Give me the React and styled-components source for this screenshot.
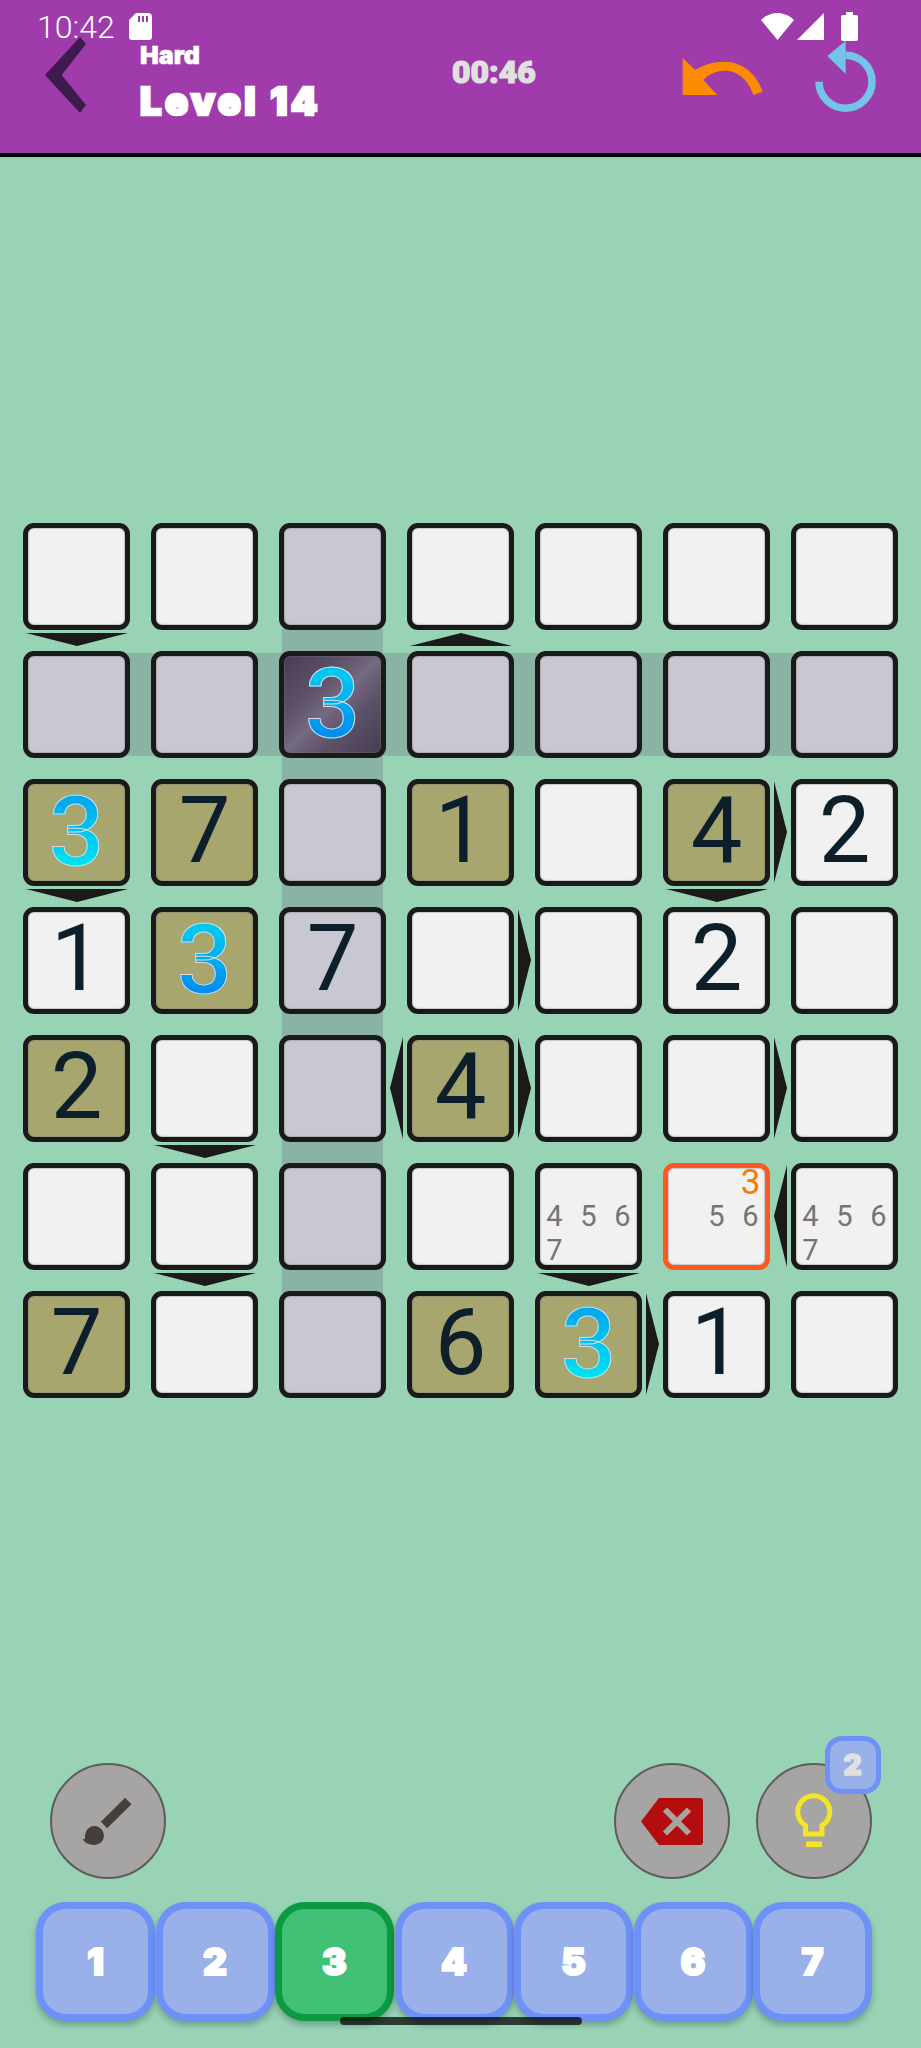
import React from "react";
import styled, { createGlobalStyle, css } from "styled-components";

const GlobalStyle = createGlobalStyle`
  html, body {
    margin: 0;
    padding: 0;
    background: #98d3b6;
  }
`;

const Page = styled.div`
  position: relative;
  width: 921px;
  height: 2048px;
  overflow: hidden;
  background: #98d3b6;
  display: flex;
  flex-direction: column;
  font-family: "Roboto", "Liberation Sans", sans-serif;
`;

const Header = styled.header`
  height: 153px;
  flex: none;
  background: #a03bab;
  border-bottom: 4px solid #000;
`;

const StatusBar = styled.div`
  position: relative;
  z-index: 1;
  height: 37px;
  box-sizing: border-box;
  padding: 8px 63px 0 37px;
  display: flex;
  align-items: flex-start;
`;

const Clock = styled.span`
  font-size: 32px;
  font-weight: 300;
  line-height: 38px;
  height: 29px;
  color: #fff;
`;

const StatusIcon = styled.svg`
  flex: none;
  display: block;
  margin: ${({ $margin }) => $margin || "4px 0 0 0"};
`;

const ToolRow = styled.div`
  display: grid;
  grid-template-columns: 95px 312px 228px 132px 1fr;
  padding-left: 45px;
  align-items: start;
`;

const TitleBlock = styled.div`
  margin-top: 5px;
  color: #fff;
  font-family: "Inter", "Liberation Sans", sans-serif;
  font-weight: 900;
`;

const Difficulty = styled.div`
  font-size: 25px;
  line-height: 26px;
  -webkit-text-stroke: 0.6px #fff;
`;

const Level = styled.div`
  margin-top: 15px;
  font-size: 38px;
  line-height: 36px;
  letter-spacing: 3.5px;
  -webkit-text-stroke: 2.6px #fff;
`;

const Timer = styled.div`
  margin-top: 18px;
  font-family: "Roboto", "Liberation Sans", sans-serif;
  font-size: 32px;
  line-height: 34px;
  font-weight: 900;
  color: #e0e0e0;
  -webkit-text-stroke: 1.2px #e0e0e0;
`;

const ToolIcon = styled.svg`
  display: block;
  margin-top: ${({ $top }) => $top}px;
`;

const Board = styled.div`
  margin: 366px 0 0 23px;
  display: grid;
  grid-template-columns: repeat(7, 107px);
  grid-template-rows: repeat(7, 107px);
  gap: 21px;
`;

const RowBand = styled.div`
  grid-row: ${({ $row }) => $row};
  grid-column: 1 / 8;
  margin: 2px 30px;
  background: #88b3a5;
`;

const ColumnBand = styled.div`
  grid-column: ${({ $col }) => $col};
  grid-row: 2 / 8;
  margin: -22px 3px 30px 3px;
  background: #88b3a5;
`;

const cellFills = {
  white: "#f1f1f1",
  grey: "#c9c7d2",
  olive: "#a7a66f",
  focus: "linear-gradient(135deg, #483c55 0%, #5e5268 32%, #746a82 50%, #5e5268 68%, #483c55 100%)",
};

const Cell = styled.div`
  position: relative;
  box-sizing: border-box;
  grid-column: ${({ $col }) => $col};
  grid-row: ${({ $row }) => $row};
  border: 5px solid ${({ $selected }) => ($selected ? "#ff5722" : "#1a1a1a")};
  border-radius: 11px;
  background: ${({ $fill }) => cellFills[$fill]};
  box-shadow: inset 0 0 1px 1px rgba(120, 120, 120, 0.35);
  display: flex;
  align-items: center;
  justify-content: center;
`;

const Digit = styled.span`
  font-size: 92px;
  line-height: 1;
  margin-top: -3px;
  color: #0c1f2a;
`;

const MatchDigit = styled(Digit)`
  font-size: 97px;
  font-weight: 500;
  margin-top: -1px;
  color: transparent;
  background: linear-gradient(
    180deg,
    ${({ $flip }) => ($flip ? "#00abf0 20%, #00dff2 80%" : "#00c6f2 20%, #008ff0 80%")}
  );
  -webkit-background-clip: text;
  background-clip: text;
  -webkit-text-stroke: 1px #dcdcdc;
`;

const PencilGrid = styled.div`
  display: grid;
  grid-template-columns: repeat(3, 34px);
  grid-template-rows: repeat(3, 34px);
  place-items: center;
  font-size: 29px;
  line-height: 1;
  color: #757575;
`;

const PencilMark = styled.span`
  ${({ $active }) =>
    $active &&
    css`
      font-size: 35px;
      color: #f57c00;
    `}
`;

const Arrow = styled.svg`
  position: absolute;
  display: block;
  ${({ $dir }) =>
    $dir === "down" || $dir === "up"
      ? css`
          left: -2px;
          top: 105px;
        `
      : css`
          left: 106px;
          top: -3px;
        `}
`;

const Actions = styled.div`
  margin-top: 365px;
  padding: 0 49px 0 50px;
  display: flex;
  gap: 26px;
`;

const ActionButton = styled.div`
  position: relative;
  box-sizing: border-box;
  width: 116px;
  height: 116px;
  border: 2.5px solid #5f5c5c;
  border-radius: 50%;
  background: #a6a5a3;
  margin-left: ${({ $push }) => ($push ? "auto" : "0")};
`;

const ActionIcon = styled.svg`
  position: absolute;
  left: -2.5px;
  top: -2.5px;
  display: block;
`;

const Badge = styled.div`
  position: absolute;
  left: 66.5px;
  top: -29.5px;
  box-sizing: border-box;
  width: 56px;
  height: 58px;
  border: 5px solid #6d91f7;
  border-radius: 17px;
  background: #9ab0e9;
  color: #e0e0e0;
  font-family: "Inter", "Liberation Sans", sans-serif;
  font-size: 28px;
  font-weight: 900;
  -webkit-text-stroke: 1.6px #e0e0e0;
  display: flex;
  align-items: center;
  justify-content: center;
`;

const NumberRow = styled.div`
  margin-top: 23px;
  padding: 0 0 9px 36px;
  height: 119px;
  overflow: hidden;
  display: flex;
  gap: 0.5px;
`;

const NumberKey = styled.div`
  box-sizing: border-box;
  flex: none;
  width: 119px;
  height: 119px;
  border: 7px solid ${({ $active }) => ($active ? "#0b9a41" : "#6d91f7")};
  border-radius: 30px;
  background: ${({ $active }) => ($active ? "#41c176" : "#9ab0e9")};
  box-shadow: 0 4px 6px rgba(0, 0, 0, 0.25);
  color: #fff;
  font-family: "Inter", "Liberation Sans", sans-serif;
  font-size: 37px;
  font-weight: 900;
  -webkit-text-stroke: 2px #fff;
  display: flex;
  align-items: center;
  justify-content: center;
`;

const HomePill = styled.div`
  position: absolute;
  left: 340px;
  top: 2017px;
  width: 242px;
  height: 8px;
  border-radius: 4px;
  background: rgba(0, 0, 0, 0.72);
`;

// v: digit, fill: cell colour, match: blue digit (flip = light end at the bottom)
const W = { fill: "white" };
const G = { fill: "grey" };
const rows = [
  [{ ...W, hints: ["down"] }, W, G, { ...W, hints: ["up"] }, W, W, W],
  [G, G, { fill: "focus", v: 3, match: true }, G, G, G, G],
  [
    { fill: "olive", v: 3, match: true, flip: true, hints: ["down"] },
    { fill: "olive", v: 7 },
    G,
    { fill: "olive", v: 1 },
    W,
    { fill: "olive", v: 4, hints: ["right", "down"] },
    { ...W, v: 2 },
  ],
  [
    { ...W, v: 1 },
    { fill: "olive", v: 3, match: true },
    { ...G, v: 7 },
    { ...W, hints: ["right"] },
    W,
    { ...W, v: 2 },
    W,
  ],
  [
    { fill: "olive", v: 2 },
    { ...W, hints: ["down"] },
    G,
    { fill: "olive", v: 4, hints: ["left-in", "right"] },
    W,
    { ...W, hints: ["right"] },
    W,
  ],
  [
    W,
    { ...W, hints: ["down"] },
    G,
    W,
    { ...W, marks: [4, 5, 6, 7], hints: ["down"] },
    { ...W, marks: [3, 5, 6], active: 3, selected: true, hints: ["left"] },
    { ...W, marks: [4, 5, 6, 7] },
  ],
  [
    { fill: "olive", v: 7 },
    W,
    G,
    { fill: "olive", v: 6 },
    { fill: "olive", v: 3, match: true, flip: true, hints: ["right"] },
    { ...W, v: 1 },
    W,
  ],
];

const arrowPoints = {
  down: "0,0 102,0 51,13",
  up: "51,0 102,13 0,13",
  right: "0,0 13,51 0,102",
  left: "13,0 0,51 13,102",
};

const HintArrow = ({ dir }) => {
  // a left arrow belonging to the gap before this cell
  const inLeft = dir === "left-in";
  const shape = inLeft ? "left" : dir;
  const flat = shape === "down" || shape === "up";
  return (
    <Arrow
      $dir={shape}
      width={flat ? 102 : 13}
      height={flat ? 13 : 102}
      style={inLeft ? { left: "-22px" } : undefined}
    >
      <polygon points={arrowPoints[shape]} fill="#1a1a1a" />
    </Arrow>
  );
};

const Pencil = ({ marks, active }) => (
  <PencilGrid>
    {[1, 2, 3, 4, 5, 6, 7, 8, 9].map((n) => (
      <PencilMark key={n} $active={n === active}>
        {marks.includes(n) ? n : ""}
      </PencilMark>
    ))}
  </PencilGrid>
);

const App = () => {
  return (
    <Page>
      <GlobalStyle />
      <Header>
        <StatusBar>
          <Clock>10:42</Clock>
          <StatusIcon width="23" height="27" $margin="5px 0 0 14px">
            <path
              d="M7 0H19a4 4 0 0 1 4 4V24a3 3 0 0 1-3 3H3a3 3 0 0 1-3-3V7Z"
              fill="#fff"
            />
            <path d="M9 3h2v6H9zM13 3h2v6h-2zM17 3h2v6h-2z" fill="#a03bab" />
          </StatusIcon>
          <StatusIcon width="33" height="27" $margin="5px 0 0 auto">
            <path d="M0 7C5 2 11 0 16.5 0C22 0 28 2 33 7L16.5 27Z" fill="#fff" />
          </StatusIcon>
          <StatusIcon width="27" height="27" $margin="5px 0 0 3px">
            <polygon points="27,0 27,27 0,27" fill="#fff" />
          </StatusIcon>
          <StatusIcon width="17" height="29" $margin="4px 0 0 17px">
            <path
              d="M5 0h7v3h3a2 2 0 0 1 2 2v22a2 2 0 0 1-2 2H2a2 2 0 0 1-2-2V5a2 2 0 0 1 2-2h3Z"
              fill="#fff"
            />
          </StatusIcon>
        </StatusBar>
        <ToolRow>
          <ToolIcon width="42" height="77" $top={0}>
            <polygon
              points="35,0 41,7 16.7,38 41,68 35,76 0,38"
              fill="#3f1a4e"
            />
          </ToolIcon>
          <TitleBlock>
            <Difficulty>Hard</Difficulty>
            <Level>Level 14</Level>
          </TitleBlock>
          <Timer>00:46</Timer>
          <ToolIcon width="86" height="44" $top={18}>
            <path
              d="M2.7 3V40H37.3L23.3 25C29 19 37 15.7 45 15.7C58 15.7 69 26 73.3 40L82.7 36.7C77 19 62 6.7 45 6.7C33 6.7 23 10 15 15Z"
              fill="#fb8c00"
            />
          </ToolIcon>
          <ToolIcon width="68" height="78" $top={1}>
            <path
              d="M7 43.7A26.5 26.5 0 1 0 33.5 17.2"
              fill="none"
              stroke="#74c3e8"
              strokeWidth="7.5"
            />
            <polygon points="33.7,2.7 15.3,18 33.7,36" fill="#74c3e8" />
          </ToolIcon>
        </ToolRow>
      </Header>

      <Board>
        <RowBand $row={2} />
        <ColumnBand $col={3} />
        {rows.map((row, r) =>
          row.map((cell, c) => (
            <Cell
              key={`${r}-${c}`}
              $row={r + 1}
              $col={c + 1}
              $fill={cell.fill}
              $selected={cell.selected}
            >
              {cell.v &&
                (cell.match ? (
                  <MatchDigit $flip={cell.flip}>{cell.v}</MatchDigit>
                ) : (
                  <Digit>{cell.v}</Digit>
                ))}
              {cell.marks && <Pencil marks={cell.marks} active={cell.active} />}
              {cell.hints &&
                cell.hints.map((dir) => <HintArrow key={dir} dir={dir} />)}
            </Cell>
          ))
        )}
      </Board>

      <Actions>
        <ActionButton>
          <ActionIcon width="116" height="116">
            <path d="M54 62L78.3 38" stroke="#483d3d" strokeWidth="9" />
            <path
              d="M32.7 76.3C36 76.5 35 74 35 72a9.5 9.5 0 1 1 9 10C39 82 35 80 32.7 76.3Z"
              fill="#483d3d"
            />
          </ActionIcon>
        </ActionButton>
        <ActionButton $push>
          <ActionIcon width="116" height="116">
            <path
              d="M27 58.5L45 35H86a3 3 0 0 1 3 3V79a3 3 0 0 1-3 3H45Z"
              fill="#b30d0d"
            />
            <path
              d="M51 46.5L75 70.5M75 46.5L51 70.5"
              stroke="#a6a5a3"
              strokeWidth="6"
            />
          </ActionIcon>
        </ActionButton>
        <ActionButton>
          <ActionIcon width="116" height="116">
            <path
              d="M49.5 62.5A16 16 0 1 1 66 62.5V71H49.5Z"
              fill="none"
              stroke="#f4e625"
              strokeWidth="5"
            />
            <rect x="50" y="78.5" width="16" height="5.5" fill="#f4e625" />
          </ActionIcon>
          <Badge>2</Badge>
        </ActionButton>
      </Actions>

      <NumberRow>
        {[1, 2, 3, 4, 5, 6, 7].map((n) => (
          <NumberKey key={n} $active={n === 3}>
            {n}
          </NumberKey>
        ))}
      </NumberRow>
      <HomePill />
    </Page>
  );
};

export default App;
